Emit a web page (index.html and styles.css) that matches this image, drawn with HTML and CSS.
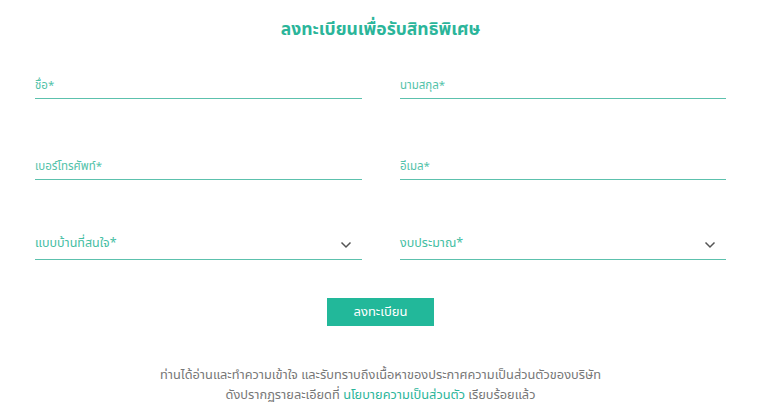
FILE: index.html
```html
<!DOCTYPE html>
<html lang="th">
<head>
  <meta charset="UTF-8" />
  <meta name="viewport" content="width=device-width, initial-scale=1.0"/>
  <title>ลงทะเบียน</title>
  <link rel="stylesheet" href="styles.css">
</head>
<body>
  <div class="register-container">
    <h2>ลงทะเบียนเพื่อรับสิทธิพิเศษ</h2>
    <form id="registerForm" class="register-form">
      <div class="field"><input type="text" name="firstname" placeholder="ชื่อ*" /></div>
      <div class="field"><input type="text" name="lastname" placeholder="นามสกุล*" /></div>
      <div class="field"><input type="tel" name="phone" placeholder="เบอร์โทรศัพท์*" /></div>
      <div class="field"><input type="email" name="email" placeholder="อีเมล*" /></div>
      <div class="field select">
        <span>แบบบ้านที่สนใจ*</span>
        <svg width="12" height="8" viewBox="0 0 12 8"><path d="M1.5 1.5 L6 6 L10.5 1.5" fill="none" stroke="#555" stroke-width="1.5"/></svg>
      </div>
      <div class="field select">
        <span>งบประมาณ*</span>
        <svg width="12" height="8" viewBox="0 0 12 8"><path d="M1.5 1.5 L6 6 L10.5 1.5" fill="none" stroke="#555" stroke-width="1.5"/></svg>
      </div>
      <div class="actions">
        <button type="submit">ลงทะเบียน</button>
      </div>
    </form>
    <p class="consent">
      ท่านได้อ่านและทำความเข้าใจ และรับทราบถึงเนื้อหาของประกาศความเป็นส่วนตัวของบริษัท<br>
      ดังปรากฏรายละเอียดที่ <a href="#">นโยบายความเป็นส่วนตัว</a> เรียบร้อยแล้ว
    </p>
  </div>
</body>
</html>
```

FILE: styles.css
```css
body {
  margin: 0;
  font-family: "Noto Sans Thai", "Noto Sans", sans-serif;
  background: white;
  color: #777;
}

.register-container {
  padding: 16px 42px 0 35px;
}

h2 {
  margin: 0 0 15px;
  text-align: center;
  font-size: 17.5px;
  font-weight: 700;
  color: #2bb59a;
}

.register-form {
  display: grid;
  grid-template-columns: 327px 326px;
  column-gap: 38px;
  row-gap: 40px;
}

.field {
  height: 40px;
  border-bottom: 1px solid #5cc1ad;
  display: flex;
  align-items: flex-end;
}

.field input {
  width: 100%;
  border: none;
  outline: none;
  padding: 0 0 4px;
  font-family: inherit;
  font-size: 11.5px;
  background: transparent;
}

.field input::placeholder {
  color: #52c2a9;
}

.select {
  justify-content: space-between;
  padding-bottom: 6px;
  box-sizing: border-box;
  font-size: 12.5px;
  color: #44bea3;
}

.select svg {
  margin-right: 10px;
  margin-bottom: 4px;
}

.actions {
  grid-column: 1 / 3;
  display: flex;
  justify-content: center;
  margin-top: -2px;
}

button {
  width: 107px;
  height: 28px;
  border: none;
  background-color: #22b89a;
  color: white;
  font-family: inherit;
  font-size: 13px;
  cursor: pointer;
}

.consent {
  margin: 39px 0 0;
  text-align: center;
  font-size: 12.8px;
  line-height: 20px;
  color: #777;
}

.consent a {
  color: #2bb59a;
  text-decoration: none;
}
```
